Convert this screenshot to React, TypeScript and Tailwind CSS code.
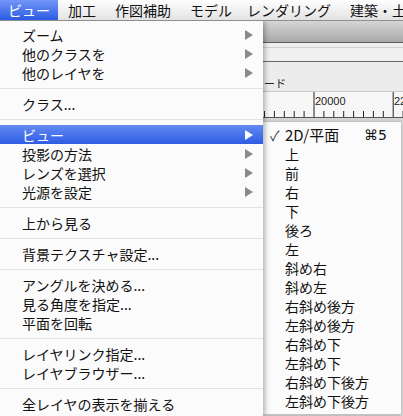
import React from "react";

const JP = { fontFamily: '"Noto Sans CJK JP", "Noto Sans", sans-serif' };

type Item = { t: string; sub?: boolean; active?: boolean } | "sep";

const mainItems: Item[] = [
  { t: "ズーム", sub: true },
  { t: "他のクラスを", sub: true },
  { t: "他のレイヤを", sub: true },
  "sep",
  { t: "クラス..." },
  "sep",
  { t: "ビュー", sub: true, active: true },
  { t: "投影の方法", sub: true },
  { t: "レンズを選択", sub: true },
  { t: "光源を設定", sub: true },
  "sep",
  { t: "上から見る" },
  "sep",
  { t: "背景テクスチャ設定..." },
  "sep",
  { t: "アングルを決める..." },
  { t: "見る角度を指定..." },
  { t: "平面を回転" },
  "sep",
  { t: "レイヤリンク指定..." },
  { t: "レイヤブラウザー..." },
  "sep",
  { t: "全レイヤの表示を揃える" },
];

const subItems = [
  "上",
  "前",
  "右",
  "下",
  "後ろ",
  "左",
  "斜め右",
  "斜め左",
  "右斜め後方",
  "左斜め後方",
  "右斜め下",
  "左斜め下",
  "右斜め下後方",
  "左斜め下後方",
];

function Arrow({ white }: { white?: boolean }) {
  return (
    <svg width="8" height="10" viewBox="0 0 8 10" className="shrink-0">
      <polygon points="0,0 8,5 0,10" fill={white ? "#ffffff" : "#8a8a8a"} />
    </svg>
  );
}

function Ruler() {
  const ticks: React.ReactNode[] = [];
  for (let i = 0; i < 16; i++) {
    const x = 1.5 + i * 9.9;
    const major = i === 5 || i === 13;
    ticks.push(
      <line
        key={i}
        x1={x}
        x2={x}
        y1={major ? 0 : 19}
        y2={25}
        stroke="#222"
        strokeWidth={1}
      />
    );
  }
  return (
    <svg width="140" height="26" viewBox="0 0 140 26" className="block">
      <line x1="0" x2="140" y1="25.5" y2="25.5" stroke="#555" strokeWidth={1} />
      {ticks}
    </svg>
  );
}

export default function App() {
  return (
    <div
      className="w-[403px] h-[416px] overflow-hidden bg-[#e9e9e9] flex flex-col text-[14px] text-[#111] leading-none"
      style={JP}
    >
      {/* menu bar */}
      <div className="h-[21px] shrink-0 flex items-stretch bg-gradient-to-b from-[#fefefe] to-[#e3e3e3] border-b border-[#8e8e8e] z-20 relative whitespace-nowrap">
        <div className="w-[58px] shrink-0 flex items-center justify-center text-white bg-gradient-to-b from-[#7395f6] to-[#2a5be3]">
          ビュー
        </div>
        <div className="w-[57px] shrink-0 flex items-center pl-[10px]">加工</div>
        <div className="w-[75px] shrink-0 flex items-center">作図補助</div>
        <div className="w-[57px] shrink-0 flex items-center">モデル</div>
        <div className="w-[103px] shrink-0 flex items-center">レンダリング</div>
        <div className="shrink-0 flex items-center">建築・土木</div>
      </div>

      <div className="flex flex-1 min-h-0">
        {/* main menu */}
        <div className="w-[263px] shrink-0 bg-[#fbfbfb] pt-[4px] z-10 relative shadow-[2px_0_5px_rgba(0,0,0,0.3)]">
          {mainItems.map((it, i) =>
            it === "sep" ? (
              <div key={i} className="h-[12px] flex items-center">
                <div className="h-px w-full bg-[#e2e2e2]" />
              </div>
            ) : (
              <div
                key={i}
                className={
                  "h-[19px] flex items-center justify-between pl-[22px] pr-[10px] " +
                  (it.active
                    ? "bg-gradient-to-b from-[#6489f3] to-[#2d5ce4] text-white"
                    : "")
                }
              >
                <span className="whitespace-nowrap">{it.t}</span>
                {it.sub && <Arrow white={it.active} />}
              </div>
            )
          )}
        </div>

        {/* right side: background window + submenu */}
        <div className="flex-1 flex flex-col min-w-0">
          <div className="h-[100px] shrink-0 flex flex-col overflow-hidden">
            <div className="h-[22px] bg-gradient-to-b from-[#d6d6d6] to-[#a8a8a8] border-b border-[#5e5e5e]" />
            <div className="h-[18px] bg-[#f0f0f0] flex flex-col">
              <div className="h-[4px]" />
              <div className="h-px bg-[#d0d0d0]" />
              <div className="flex-1" />
            </div>
            <div className="h-px bg-[#6a6a6a]" />
            <div className="h-[29px] bg-[#ececec] flex items-end pb-[2px] pl-[1px]">
              <span className="text-[11px] text-[#222]">ード</span>
            </div>
            <div className="h-[27px] bg-[#f7f7f7] border-t border-[#c8c8c8] relative">
              <div className="absolute left-0 top-0">
                <Ruler />
              </div>
              <span
                className="absolute left-[52px] top-[4px] text-[11px] text-[#222]"
                style={{ fontFamily: '"Liberation Sans", sans-serif' }}
              >
                20000
              </span>
              <span
                className="absolute left-[131px] top-[4px] text-[11px] text-[#222]"
                style={{ fontFamily: '"Liberation Sans", sans-serif' }}
              >
                22
              </span>
            </div>
            <div className="flex-1 bg-[#d8d8d8]" />
          </div>

          {/* submenu */}
          <div className="w-[139px] bg-[#fbfbfb] border border-[#c4c4c4] border-l-0 pt-[3px] pb-[4px] shadow-[0_2px_5px_rgba(0,0,0,0.25)]">
            <div className="h-[19px] flex items-center pl-[7px] pr-[14px]">
              <span className="w-[15px] text-[14px] text-[#444]">✓</span>
              <span className="flex-1 text-[15px]">2D/平面</span>
              <span
                className="text-[14px]"
                style={{ fontFamily: '"DejaVu Sans", "Noto Sans", sans-serif' }}
              >
                ⌘5
              </span>
            </div>
            {subItems.map((s) => (
              <div key={s} className="h-[19px] flex items-center pl-[22px]">
                <span className="whitespace-nowrap">{s}</span>
              </div>
            ))}
          </div>
        </div>
      </div>
    </div>
  );
}
